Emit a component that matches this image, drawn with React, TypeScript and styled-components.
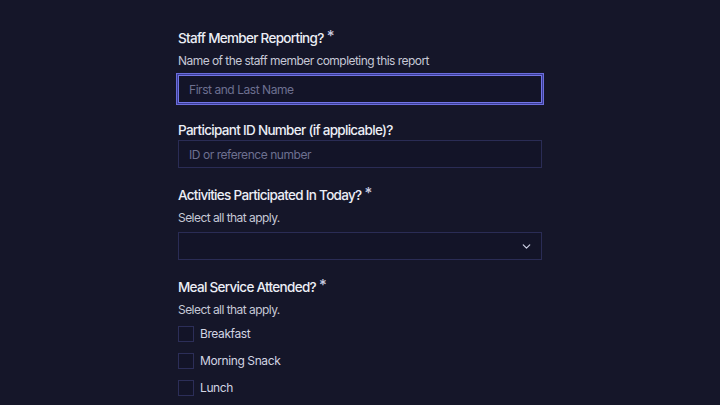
import React, { FC } from 'react';
import styled, { createGlobalStyle, css } from 'styled-components';

const GlobalStyle = createGlobalStyle`
	html, body {
		margin: 0;
		padding: 0;
		background: #151629;
	}
	body {
		font-family: Inter, 'Noto Sans', sans-serif;
		-webkit-font-smoothing: antialiased;
	}
	* {
		box-sizing: border-box;
	}
`;

const Page = styled.div`
	width: 720px;
	height: 405px;
	overflow: hidden;
	background: #151629;
	display: flex;
	justify-content: center;
`;

const Form = styled.form`
	width: 364px;
	padding-top: 28px;
	display: flex;
	flex-direction: column;
	gap: 17px;
`;

const Field = styled.div`
	display: flex;
	flex-direction: column;
`;

const Label = styled.label`
	font-size: 13.5px;
	line-height: 20px;
	font-weight: 500;
	letter-spacing: -0.7px;
	color: #eceef6;
`;

const Star = styled.sup`
	font-size: 15px;
	line-height: 0;
	margin-left: 3px;
	vertical-align: 2px;
	color: #c9cbe0;
`;

const Hint = styled.p`
	margin: 4px 0 5px;
	font-size: 12px;
	line-height: 18px;
	letter-spacing: -0.55px;
	color: #c6c8d6;
`;

const inputBox = css`
	width: 100%;
	height: 28px;
	background: #131428;
	border: 1px solid #2a2c55;
	border-radius: 0;
	outline: none;
`;

interface InputProps {
	focused?: boolean;
}

const TextInput = styled.input<InputProps>`
	${inputBox}
	padding: 0 10px;
	font-family: Inter, 'Noto Sans', sans-serif;
	font-size: 12px;
	letter-spacing: -0.45px;
	color: #eceef6;
	&::placeholder {
		color: #6d7090;
	}
	${({ focused }) =>
		focused &&
		css`
			border-color: #7275e6;
			box-shadow: 0 0 0 1px #3b3d96, 0 0 0 2px #6a6ddc;
		`}
`;

const SelectBox = styled.div`
	${inputBox}
	display: flex;
	align-items: center;
	justify-content: flex-end;
	padding: 0 8px;
	color: #cdd0e4;
`;

const CheckList = styled.div`
	display: flex;
	flex-direction: column;
	gap: 11px;
	margin-top: 2px;
`;

const CheckRow = styled.label`
	display: flex;
	align-items: center;
	gap: 6px;
	font-size: 12px;
	line-height: 16px;
	letter-spacing: -0.4px;
	color: #d2d4e2;
`;

const Box = styled.span`
	width: 16px;
	height: 16px;
	border: 1px solid #2c2e58;
	background: #131428;
`;

const Chevron: FC = () => (
	<svg width="13" height="13" viewBox="0 0 24 24" fill="none" stroke="currentColor" strokeWidth="2.2" strokeLinecap="round" strokeLinejoin="round">
		<path d="m6 9 6 6 6-6" />
	</svg>
);

const meals = ['Breakfast', 'Morning Snack', 'Lunch'];

const App: FC = () => (
	<>
		<GlobalStyle />
		<Page>
			<Form>
				<Field>
					<Label>
						Staff Member Reporting?<Star>*</Star>
					</Label>
					<Hint>Name of the staff member completing this report</Hint>
					<TextInput focused placeholder="First and Last Name" />
				</Field>
				<Field>
					<Label>Participant ID Number (if applicable)?</Label>
					<TextInput placeholder="ID or reference number" />
				</Field>
				<Field>
					<Label>
						Activities Participated In Today?<Star>*</Star>
					</Label>
					<Hint>Select all that apply.</Hint>
					<SelectBox>
						<Chevron />
					</SelectBox>
				</Field>
				<Field>
					<Label>
						Meal Service Attended?<Star>*</Star>
					</Label>
					<Hint>Select all that apply.</Hint>
					<CheckList>
						{meals.map((m) => (
							<CheckRow key={m}>
								<Box />
								{m}
							</CheckRow>
						))}
					</CheckList>
				</Field>
			</Form>
		</Page>
	</>
);

export default App;
